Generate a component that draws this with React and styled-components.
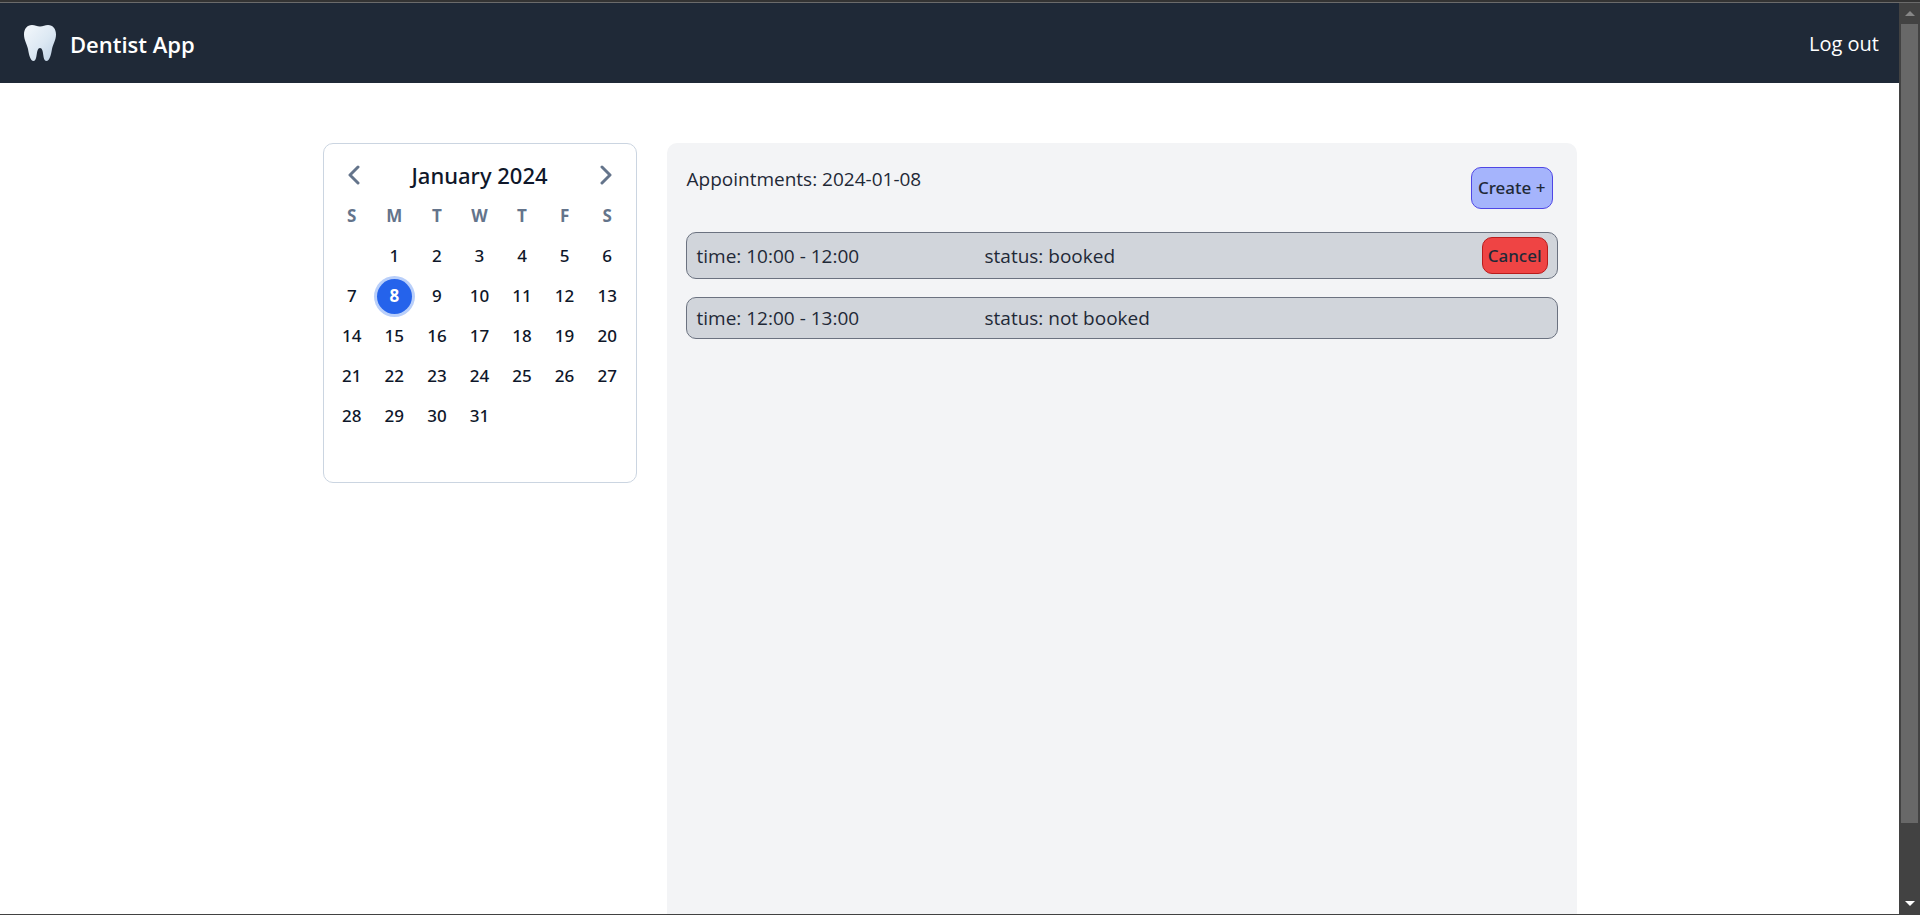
import React from "react";
import styled, { createGlobalStyle } from "styled-components";

const GlobalStyle = createGlobalStyle`
  *, *::before, *::after { box-sizing: border-box; }
  body {
    margin: 0;
    background: #ffffff;
    color: #1f2937;
    font-family: "Open Sans", "Noto Sans", sans-serif;
    font-size: 19px;
    line-height: 28px;
  }
  button { font: inherit; color: inherit; cursor: pointer; }
`;

const MEDIUM_FONT = `"Noto Sans", "Open Sans", sans-serif`;

const Page = styled.div`
  display: flex;
  flex-direction: column;
  min-height: 100vh;
`;

const WindowEdge = styled.div`
  height: 3px;
  background: #333333;
  border-bottom: 1px solid #6b6b6b;
`;

const Viewport = styled.div`
  flex: 1;
  display: flex;
  border-bottom: 1px solid #424242;
`;

const Shell = styled.div`
  flex: 1;
  display: flex;
  flex-direction: column;
  min-width: 0;
`;

const Header = styled.header`
  display: flex;
  align-items: center;
  justify-content: space-between;
  height: 80px;
  padding: 2px 20px 0;
  background: #1f2937;
  color: #ffffff;
`;

const Brand = styled.a`
  display: flex;
  align-items: center;
  gap: 12px;
  color: inherit;
  font-size: 22px;
  font-weight: 600;
  text-decoration: none;
`;

const HeaderLink = styled.a`
  color: inherit;
  font-size: 20px;
  text-decoration: none;
`;

const Content = styled.main`
  flex: 1;
  display: flex;
  align-items: stretch;
  gap: 30px;
  width: 100%;
  max-width: 1254px;
  margin: 0 auto;
  padding-top: 60px;
`;

const CalendarCard = styled.section`
  align-self: flex-start;
  width: 314px;
  padding: 7px 7px 6px;
  border: 1px solid #cbd5e1;
  border-radius: 10px;
  color: #0f172a;
`;

const MonthBar = styled.div`
  display: flex;
  align-items: center;
  justify-content: space-between;
  height: 45px;
  padding: 3px 8px 0;
`;

const MonthTitle = styled.h2`
  margin: 0;
  font-family: ${MEDIUM_FONT};
  font-size: 22px;
  font-weight: 500;
`;

const ArrowButton = styled.button`
  display: grid;
  place-items: center;
  width: 30px;
  height: 30px;
  padding: 0;
  border: 0;
  background: none;
  color: #64748b;
`;

const Days = styled.table`
  width: 100%;
  table-layout: fixed;
  border-collapse: collapse;
`;

const Weekday = styled.th`
  height: 40px;
  padding: 0;
  color: #64748b;
  font-size: 17px;
  font-weight: 700;
`;

const DayCell = styled.td`
  height: 40px;
  padding: 0;
  text-align: center;
`;

const DayButton = styled.button`
  display: block;
  width: 35px;
  height: 35px;
  margin: 0 auto;
  padding: 0;
  border: 0;
  border-radius: 50%;
  background: ${(p) => (p.$selected ? "#2563eb" : "transparent")};
  box-shadow: ${(p) => (p.$selected ? "0 0 0 3px #b9cffa" : "none")};
  color: ${(p) => (p.$selected ? "#ffffff" : "inherit")};
  font-family: ${MEDIUM_FONT};
  font-size: 17px;
  font-weight: ${(p) => (p.$selected ? 700 : 500)};
`;

const Panel = styled.section`
  flex: 1;
  padding: 24px 19px;
  border-radius: 10px 10px 0 0;
  background: #f3f4f6;
`;

const PanelHead = styled.div`
  display: flex;
  align-items: flex-start;
  justify-content: space-between;
  margin-bottom: 23px;
  padding-right: 5px;
`;

const PanelTitle = styled.h1`
  margin: 0;
  padding-left: 1px;
  font-size: 19px;
  font-weight: 400;
  line-height: 24px;
`;

const ActionButton = styled.button`
  height: ${(p) => (p.$danger ? 37 : 42)}px;
  padding: 0 ${(p) => (p.$danger ? 5 : 6)}px;
  border: 1px solid ${(p) => (p.$danger ? "#b91c1c" : "#4f46e5")};
  border-radius: 10px;
  background: ${(p) => (p.$danger ? "#ef4444" : "#a5b4fc")};
  font-family: ${MEDIUM_FONT};
  font-size: 17px;
  font-weight: 500;
`;

const List = styled.ul`
  display: grid;
  gap: 18px;
  margin: 0;
  padding: 0;
  list-style: none;
`;

const Appointment = styled.li`
  display: grid;
  grid-template-columns: 288px 1fr auto;
  align-items: center;
  min-height: 42px;
  padding: 4px 9px 4px 10px;
  border: 1px solid #6b7280;
  border-radius: 10px;
  background: #d1d5db;
`;

const ScrollRail = styled.div`
  display: flex;
  flex-direction: column;
  align-items: center;
  width: 21px;
  background: #424242;
`;

const RailEnd = styled.div`
  display: grid;
  place-items: center;
  width: 21px;
  height: 21px;
  color: ${(p) => (p.$active ? "#ffffff" : "#868686")};
`;

const RailTrack = styled.div`
  flex: 1;
  width: 17px;
  display: flex;
  flex-direction: column;
`;

const RailThumb = styled.div`
  flex: 92;
  background: #686868;
`;

const RailRest = styled.div`
  flex: 8;
`;

const ToothLogo = () => (
  <svg width="38" height="40" viewBox="0 0 38 40" aria-hidden="true">
    <defs>
      <linearGradient id="enamel" x1="0" y1="0" x2="1" y2="1">
        <stop offset="0" stopColor="#f4f8fc" />
        <stop offset="0.55" stopColor="#dce8f3" />
        <stop offset="1" stopColor="#bdd0e4" />
      </linearGradient>
    </defs>
    <path
      fill="url(#enamel)"
      d="M12 1 C15 1 17 2.500 20 2.500 C23 2.500 25 1 28 1 C33 1 36 5 36 10.500 C36 16 33 20 32 25 C31 31 29.500 37 26.500 37 C22 37 24.500 24 20 24 C15.500 24 18 37 13.500 37 C10.500 37 9 31 8 25 C7 20 4 16 4 10.500 C4 5 7 1 12 1 Z"
    />
  </svg>
);

const Chevron = ({ d }) => (
  <svg
    width="12"
    height="20"
    viewBox="0 0 12 20"
    fill="none"
    stroke="currentColor"
    strokeWidth="3"
    strokeLinecap="round"
    strokeLinejoin="round"
    aria-hidden="true"
  >
    <path d={d} />
  </svg>
);

const WEEKDAYS = [
  ["S", "Sunday"],
  ["M", "Monday"],
  ["T", "Tuesday"],
  ["W", "Wednesday"],
  ["T", "Thursday"],
  ["F", "Friday"],
  ["S", "Saturday"],
];

const WEEKS = Array.from({ length: 6 }, (_, week) =>
  Array.from({ length: 7 }, (_, day) => {
    const date = week * 7 + day;
    return date >= 1 && date <= 31 ? date : null;
  })
);

const APPOINTMENTS = [
  { time: "10:00 - 12:00", status: "booked", cancellable: true },
  { time: "12:00 - 13:00", status: "not booked", cancellable: false },
];

const Calendar = ({ selected, onSelect }) => (
  <CalendarCard aria-label="Calendar">
    <MonthBar>
      <ArrowButton aria-label="Previous month">
        <Chevron d="M10 2 L2 10 L10 18" />
      </ArrowButton>
      <MonthTitle>January 2024</MonthTitle>
      <ArrowButton aria-label="Next month">
        <Chevron d="M2 2 L10 10 L2 18" />
      </ArrowButton>
    </MonthBar>
    <Days>
      <thead>
        <tr>
          {WEEKDAYS.map(([letter, name]) => (
            <Weekday key={name} scope="col" abbr={name}>
              {letter}
            </Weekday>
          ))}
        </tr>
      </thead>
      <tbody>
        {WEEKS.map((week, i) => (
          <tr key={i}>
            {week.map((date, j) => (
              <DayCell key={j}>
                {date && (
                  <DayButton $selected={date === selected} onClick={() => onSelect(date)}>
                    {date}
                  </DayButton>
                )}
              </DayCell>
            ))}
          </tr>
        ))}
      </tbody>
    </Days>
  </CalendarCard>
);

const Appointments = ({ day }) => (
  <Panel>
    <PanelHead>
      <PanelTitle>{`Appointments: 2024-01-${String(day).padStart(2, "0")}`}</PanelTitle>
      <ActionButton>Create +</ActionButton>
    </PanelHead>
    <List>
      {APPOINTMENTS.map((item) => (
        <Appointment key={item.time}>
          <span>{`time: ${item.time}`}</span>
          <span>{`status: ${item.status}`}</span>
          {item.cancellable && <ActionButton $danger>Cancel</ActionButton>}
        </Appointment>
      ))}
    </List>
  </Panel>
);

const Scrollbar = () => (
  <ScrollRail aria-hidden="true">
    <RailEnd>
      <svg width="10" height="5" viewBox="0 0 10 5">
        <path fill="currentColor" d="M0 5 L5 0 L10 5 Z" />
      </svg>
    </RailEnd>
    <RailTrack>
      <RailThumb />
      <RailRest />
    </RailTrack>
    <RailEnd $active>
      <svg width="10" height="5" viewBox="0 0 10 5">
        <path fill="currentColor" d="M0 0 L10 0 L5 5 Z" />
      </svg>
    </RailEnd>
  </ScrollRail>
);

export default function App() {
  const [selected, setSelected] = React.useState(8);

  return (
    <Page>
      <GlobalStyle />
      <WindowEdge />
      <Viewport>
        <Shell>
          <Header>
            <Brand href="#">
              <ToothLogo />
              Dentist App
            </Brand>
            <HeaderLink href="#">Log out</HeaderLink>
          </Header>
          <Content>
            <Calendar selected={selected} onSelect={setSelected} />
            <Appointments day={selected} />
          </Content>
        </Shell>
        <Scrollbar />
      </Viewport>
    </Page>
  );
}
